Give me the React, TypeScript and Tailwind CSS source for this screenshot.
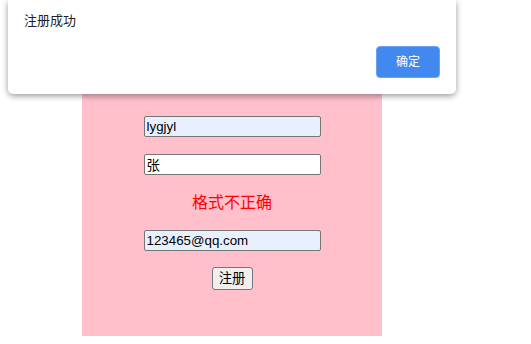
import React from "react";

export default function App() {
  const font = { fontFamily: '"Liberation Sans", Arial, "Noto Sans CJK SC", sans-serif' };
  return (
    <div className="relative w-[531px] h-[344px] bg-white overflow-hidden" style={font}>
      <div className="ml-[82px] w-[300px] h-[336px] bg-[#ffc0cb] flex flex-col items-center pt-[116px]">
        <input
          readOnly
          value="lygjyl"
          className="w-[177px] h-[21px] bg-[#e8f0fe] border border-[#767676] rounded-[2px] px-[2px] text-[13.33px] text-black outline-none"
          style={font}
        />
        <input
          readOnly
          value="张"
          className="mt-[17px] w-[177px] h-[21px] bg-white border border-[#767676] rounded-[2px] px-[2px] text-[13.33px] text-black outline-none"
          style={font}
        />
        <div className="mt-[18px] h-[20px] leading-[20px] text-[16px] text-[#ff0000]">格式不正确</div>
        <input
          readOnly
          value="123465@qq.com"
          className="mt-[17px] w-[177px] h-[21px] bg-[#e8f0fe] border border-[#767676] rounded-[2px] px-[2px] text-[13.33px] text-black outline-none"
          style={font}
        />
        <button
          className="mt-[16px] w-[41px] h-[23px] bg-[#efefef] border border-[#767676] rounded-[3px] text-[13.33px] text-black leading-none"
          style={font}
        >
          注册
        </button>
      </div>
      <div className="absolute left-[8px] top-0 w-[448px] h-[94px] bg-white rounded-b-[5px] shadow-[0_2px_6px_rgba(0,0,0,0.4)]">
        <div className="absolute left-[16px] top-[12px] text-[13px] leading-[18px] text-[#202124]">注册成功</div>
        <button className="absolute right-[16px] bottom-[16px] w-[64px] h-[32px] rounded-[4px] bg-[#4189ee] border border-[#6aa2f0] text-white text-[12px]">
          确定
        </button>
      </div>
    </div>
  );
}
